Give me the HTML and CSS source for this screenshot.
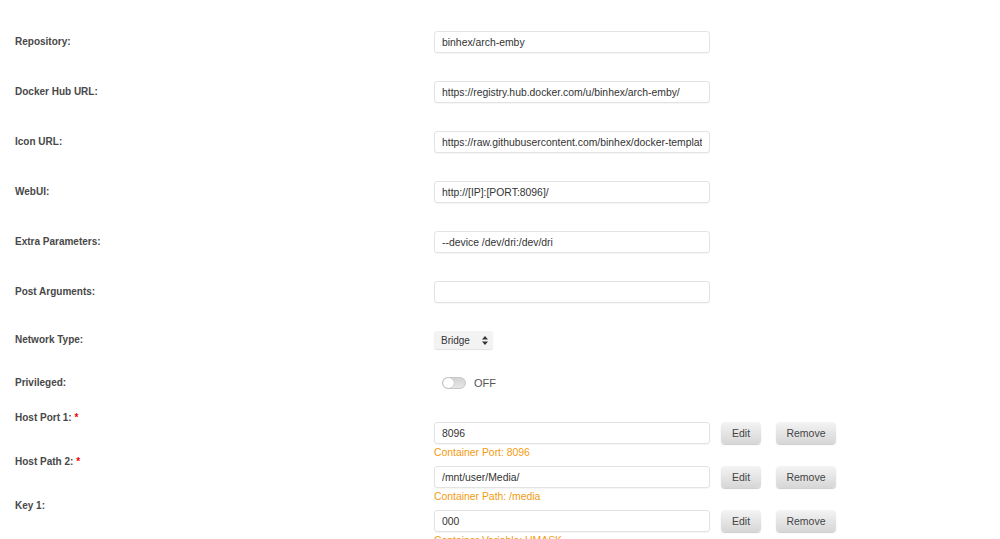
FILE: index.html
```html
<!DOCTYPE html>
<html>
<head>
    <meta charset="utf-8">
    <title>Update Container</title>
    <link rel="stylesheet" href="styles.css">
</head>
<body>
    <form class="template-form">
        <div class="form-row">
            <label class="form-label">Repository:</label>
            <input type="text" class="text-field" value="binhex/arch-emby">
        </div>
        <div class="form-row">
            <label class="form-label">Docker Hub URL:</label>
            <input type="text" class="text-field" value="https://registry.hub.docker.com/u/binhex/arch-emby/">
        </div>
        <div class="form-row">
            <label class="form-label">Icon URL:</label>
            <input type="text" class="text-field" value="https://raw.githubusercontent.com/binhex/docker-templates/master/binhex/images/emby-icon.png">
        </div>
        <div class="form-row">
            <label class="form-label">WebUI:</label>
            <input type="text" class="text-field" value="http://[IP]:[PORT:8096]/">
        </div>
        <div class="form-row">
            <label class="form-label">Extra Parameters:</label>
            <input type="text" class="text-field" value="--device /dev/dri:/dev/dri">
        </div>
        <div class="form-row">
            <label class="form-label">Post Arguments:</label>
            <input type="text" class="text-field" value="">
        </div>
        <div class="form-row row-network">
            <label class="form-label">Network Type:</label>
            <div class="select-box">
                <span>Bridge</span>
                <svg width="6" height="9" viewBox="0 0 6 9"><path d="M3 0 L6 3.5 H0 Z M3 9 L6 5.5 H0 Z" fill="#333"/></svg>
            </div>
        </div>
        <div class="form-row row-privileged">
            <label class="form-label">Privileged:</label>
            <div class="switch-wrap">
                <span class="switch"><span class="switch-knob"></span></span>
                <span class="switch-text">OFF</span>
            </div>
        </div>

        <div class="config-list">
            <div class="config-row">
                <label class="form-label">Host Port 1: <span class="required">*</span></label>
                <div class="config-field">
                    <div class="config-line">
                        <input type="text" class="text-field" value="8096">
                        <button type="button" class="btn btn-edit">Edit</button>
                        <button type="button" class="btn btn-remove">Remove</button>
                    </div>
                    <div class="config-desc">Container Port: 8096</div>
                </div>
            </div>
            <div class="config-row">
                <label class="form-label">Host Path 2: <span class="required">*</span></label>
                <div class="config-field">
                    <div class="config-line">
                        <input type="text" class="text-field" value="/mnt/user/Media/">
                        <button type="button" class="btn btn-edit">Edit</button>
                        <button type="button" class="btn btn-remove">Remove</button>
                    </div>
                    <div class="config-desc">Container Path: /media</div>
                </div>
            </div>
            <div class="config-row">
                <label class="form-label">Key 1:</label>
                <div class="config-field">
                    <div class="config-line">
                        <input type="text" class="text-field" value="000">
                        <button type="button" class="btn btn-edit">Edit</button>
                        <button type="button" class="btn btn-remove">Remove</button>
                    </div>
                    <div class="config-desc">Container Variable: UMASK</div>
                </div>
            </div>
        </div>
    </form>
</body>
</html>
```

FILE: styles.css
```css
html, body {
    margin: 0;
    background: #fff;
    overflow: hidden;
}
body {
    font-family: "Liberation Sans", Arial, sans-serif;
    font-size: 10px;
    color: #444;
}
.template-form {
    padding: 17px 15px 0 15px;
}

.form-row {
    display: grid;
    grid-template-columns: 419px 1fr;
    align-items: center;
    height: 50px;
}
.row-network { height: 46px; }
.row-privileged { height: 40px; }

.form-label {
    font-weight: bold;
    font-size: 10px;
    line-height: 12px;
    color: #484848;
}
.required {
    color: #e00;
}

.text-field {
    box-sizing: border-box;
    flex: none;
    width: 276px;
    height: 22px;
    margin: 0;
    padding: 0 7px;
    border: 1px solid #e3e3e3;
    border-radius: 3px;
    box-shadow: 0 1px 1px rgba(0,0,0,0.04);
    background: #fff;
    font-family: "Liberation Sans", Arial, sans-serif;
    font-size: 10.4px;
    color: #333;
    outline: none;
}

.select-box {
    box-sizing: border-box;
    width: 59px;
    height: 18px;
    display: flex;
    align-items: center;
    justify-content: space-between;
    padding: 0 5px 0 7px;
    background: #f3f3f3;
    border-radius: 3px;
    box-shadow: 0 1px 1px rgba(0,0,0,0.12);
    font-size: 10px;
    color: #333;
}

.switch-wrap {
    display: flex;
    align-items: center;
    gap: 8px;
    padding-left: 8px;
}
.switch {
    box-sizing: border-box;
    display: flex;
    width: 24px;
    height: 12px;
    border-radius: 6px;
    background: linear-gradient(#d4d4d4, #e6e6e6);
    border: 1px solid #c8c8c8;
}
.switch-knob {
    box-sizing: border-box;
    width: 11px;
    height: 10px;
    border-radius: 5px;
    background: #fff;
    box-shadow: 0 0 1px rgba(0,0,0,0.4);
}
.switch-text {
    font-size: 11px;
    color: #555;
}

.config-list {
    padding-top: 19px;
}
.config-row {
    display: grid;
    grid-template-columns: 419px 1fr;
    height: 44px;
}
.config-row .form-label {
    margin-top: -10px;
}
.config-line {
    display: flex;
    align-items: center;
}
.btn {
    flex: none;
    height: 22px;
    border: none;
    border-radius: 4px;
    background: linear-gradient(#f4f4f4, #d6d6d6);
    box-shadow: 0 1px 1px rgba(0,0,0,0.2);
    font-family: "Liberation Sans", Arial, sans-serif;
    font-size: 10.5px;
    color: #444;
    padding: 0;
    cursor: pointer;
}
.btn-edit {
    width: 40px;
    margin-left: 11px;
}
.btn-remove {
    width: 60px;
    margin-left: 15px;
}
.config-desc {
    margin-top: 3px;
    line-height: 12px;
    font-size: 10.4px;
    color: #f29b0f;
}
```
